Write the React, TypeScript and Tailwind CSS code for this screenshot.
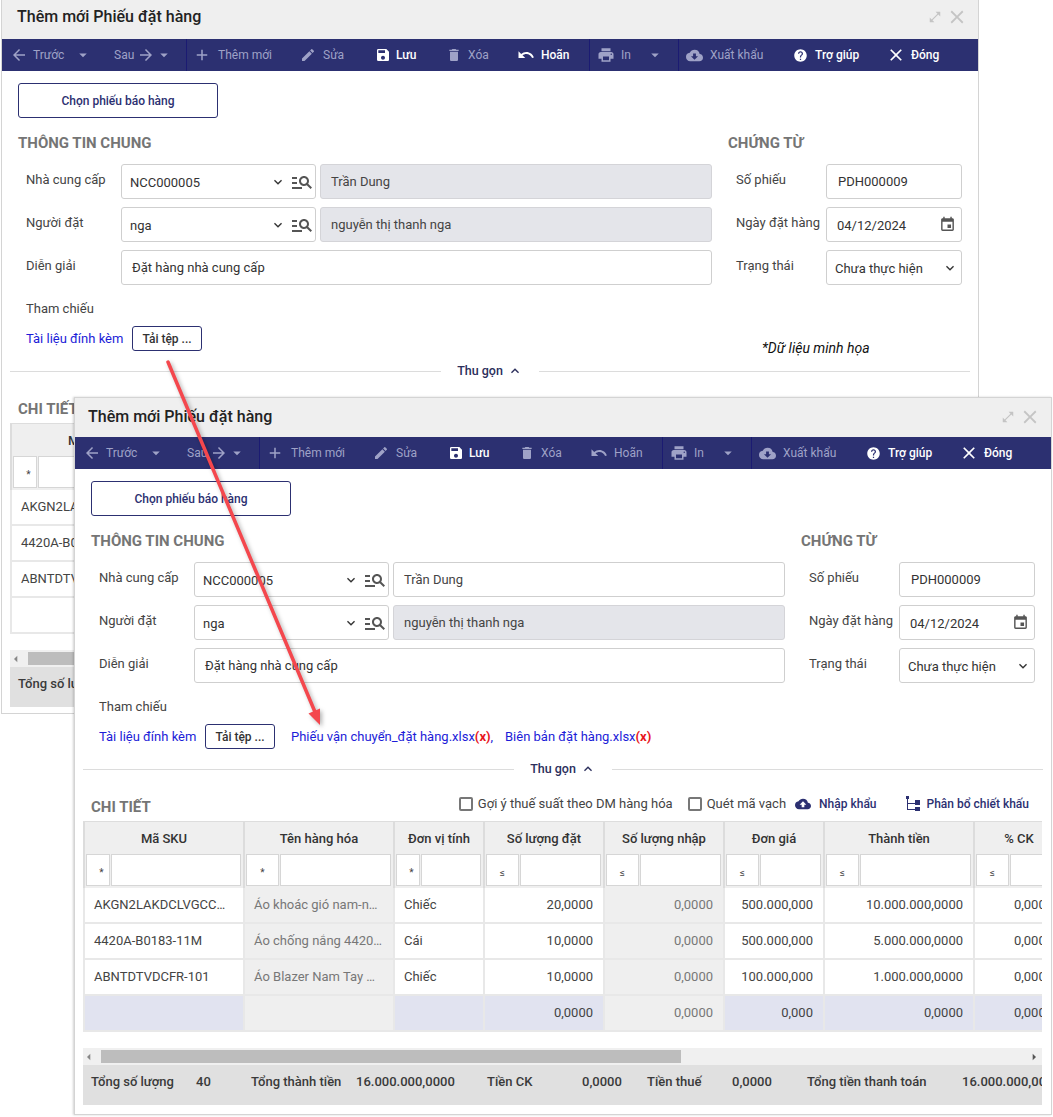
import type { ReactNode } from 'react';
import {
  MdAdd,
  MdArrowBack,
  MdArrowDropDown,
  MdArrowForward,
  MdArrowLeft,
  MdArrowRight,
  MdClose,
  MdCloudDownload,
  MdCloudUpload,
  MdDelete,
  MdEdit,
  MdEvent,
  MdHelp,
  MdKeyboardArrowDown,
  MdKeyboardArrowUp,
  MdManageSearch,
  MdOpenInFull,
  MdPrint,
  MdSave,
  MdUndo
} from 'react-icons/md';

const COLS = 'grid grid-cols-[160px_150px_90px_120px_120px_100px_150px_90px]';

const columns = [
  { label: 'Mã SKU', op: '*', opWidth: 'w-[24px] pl-[7px]' },
  { label: 'Tên hàng hóa', op: '*', opWidth: 'w-[33px]' },
  { label: 'Đơn vị tính', op: '*', opWidth: 'w-[24px] pl-[7px]' },
  { label: 'Số lượng đặt', op: '≤', opWidth: 'w-[33px]' },
  { label: 'Số lượng nhập', op: '≤', opWidth: 'w-[33px]' },
  { label: 'Đơn giá', op: '≤', opWidth: 'w-[33px]' },
  { label: 'Thành tiền', op: '≤', opWidth: 'w-[33px]' },
  { label: '% CK', op: '≤', opWidth: 'w-[33px]' }
];

const rows = [
  ['AKGN2LAKDCLVGCC…', 'Áo khoác gió nam-n…', 'Chiếc', '20,0000', '0,0000', '500.000,000', '10.000.000,0000', '0,0000'],
  ['4420A-B0183-11M', 'Áo chống nắng 4420…', 'Cái', '10,0000', '0,0000', '500.000,000', '5.000.000,0000', '0,0000'],
  ['ABNTDTVDCFR-101', 'Áo Blazer Nam Tay …', 'Chiếc', '10,0000', '0,0000', '100.000,000', '1.000.000,0000', '0,0000']
];

const sumRow = ['', '', '', '0,0000', '0,0000', '0,000', '0,0000', '0,0000'];

function Tool({
  className,
  icon,
  label,
  trailing,
  disabled,
  caret,
  caretClass
}: {
  className: string;
  icon?: ReactNode;
  label: string;
  trailing?: ReactNode;
  disabled?: boolean;
  caret?: boolean;
  caretClass?: string;
}) {
  return (
    <div
      className={`flex h-full shrink-0 items-center text-[12px] ${
        disabled ? 'text-[#9fa2c7]' : 'font-medium text-white'
      } ${className}`}
    >
      {icon}
      <span>{label}</span>
      {trailing}
      {caret && <MdArrowDropDown size={18} className={caretClass} />}
    </div>
  );
}

function Toolbar({ undoDisabled }: { undoDisabled: boolean }) {
  return (
    <div className="flex h-[32px] items-center bg-[#2c3071]">
      <Tool className="w-[97px] gap-[5px] pl-[8px]" icon={<MdArrowBack size={18} />} label="Trước" disabled caret caretClass="ml-[5px]" />
      <Tool className="w-[88px] gap-[3px] border-r border-[#1b1b72] pl-[15px]" label="Sau" trailing={<MdArrowForward size={18} />} disabled caret caretClass="-ml-[3px]" />
      <Tool className="w-[100px] gap-[7px] pl-[6px]" icon={<MdAdd size={18} />} label="Thêm mới" disabled />
      <Tool className="w-[73px] gap-[7px] pl-[13px]" icon={<MdEdit size={16} />} label="Sửa" disabled />
      <Tool className="w-[73px] gap-[5px] pl-[15px]" icon={<MdSave size={16} />} label="Lưu" />
      <Tool className="w-[71px] gap-[6px] pl-[13px]" icon={<MdDelete size={16} />} label="Xóa" disabled />
      <Tool className="w-[86px] gap-[6px] border-r border-[#1b1b72] pl-[13px]" icon={<MdUndo size={18} />} label="Hoãn" disabled={undoDisabled} />
      <Tool className="w-[89px] gap-[6px] border-r border-[#1b1b72] pl-[7px]" icon={<MdPrint size={18} />} label="In" disabled caret caretClass="ml-[9px]" />
      <Tool className="w-[100px] gap-[7px] pl-[7px]" icon={<MdCloudDownload size={17} />} label="Xuất khẩu" disabled />
      <Tool className="w-[96px] gap-[7px] pl-[14px]" icon={<MdHelp size={15} />} label="Trợ giúp" />
      <Tool className="w-[90px] gap-[5px] pl-[11px]" icon={<MdClose size={20} />} label="Đóng" />
    </div>
  );
}

function SectionTitle({ children }: { children: ReactNode }) {
  return <h3 className="text-[15px] font-bold leading-[20px] text-[#757575]">{children}</h3>;
}

function Field({ label, labelWidth, children }: { label: string; labelWidth: string; children: ReactNode }) {
  return (
    <div className="flex h-[35px]">
      <label className={`shrink-0 pb-[4px] pl-[8px] text-[13px] leading-[31px] text-[#444] ${labelWidth}`}>{label}</label>
      {children}
    </div>
  );
}

function LookupInput({ code, name, editable }: { code: string; name: string; editable?: boolean }) {
  return (
    <>
      <div className="flex w-[195px] items-center rounded-[3px] border border-[#cfcfcf] pl-[8px] pr-[1px] text-[13px] text-[#333]">
        <span className="flex-1 pt-[2px]">{code}</span>
        <MdKeyboardArrowDown size={16} className="mr-[4px] text-[#333]" />
        <MdManageSearch size={24} className="text-[#555]" />
      </div>
      <div
        className={`ml-[4px] flex flex-1 items-center rounded-[3px] border pl-[10px] text-[13px] text-[#444] ${
          editable ? 'border-[#cfcfcf] bg-white' : 'border-[#d4d4d8] bg-[#e4e5ea]'
        }`}
      >
        {name}
      </div>
    </>
  );
}

function TreeIcon() {
  return (
    <svg viewBox="0 0 14 16" className="h-[16px] w-[14px]" fill="#2c3071">
      <rect x="0" y="0" width="3" height="3" />
      <rect x="1" y="3" width="1" height="11" />
      <rect x="2" y="7" width="7" height="1" />
      <rect x="2" y="13" width="7" height="1" />
      <rect x="9" y="4" width="5" height="5" />
      <rect x="9" y="11" width="5" height="4" />
    </svg>
  );
}

function DetailTable({ blankSum }: { blankSum?: boolean }) {
  return (
    <div className="mx-[8px] w-[959px] overflow-hidden">
      <div className={`${COLS} h-[33px] border-t border-[#ddd] bg-[#efefef] text-[13px] font-medium text-[#333]`}>
        {columns.map(col => (
          <div key={col.label} className="flex items-center justify-center border-l-2 border-[#dcdcdc] pt-[1px]">
            {col.label}
          </div>
        ))}
      </div>
      <div className={`${COLS} h-[34px] bg-[#efefef]`}>
        {columns.map(col => (
          <div key={col.label} className="flex gap-[1px] border-l-2 border-[#dcdcdc] pb-[2px] pl-[1px] pr-[2px]">
            <div className={`flex shrink-0 items-center justify-center border border-[#d6d6d6] bg-white pt-[5px] text-[10px] text-[#444] ${col.opWidth}`}>
              {col.op}
            </div>
            <div className="flex-1 border border-[#d6d6d6] bg-white" />
          </div>
        ))}
      </div>
      {rows.map(row => (
        <div key={row[0]} className={`${COLS} h-[36px] border-b-2 border-[#e8e8e8] text-[13px] text-[#444]`}>
          {row.map((cell, i) => (
            <div
              key={i}
              className={`flex items-center border-l-2 border-[#e8e8e8] pl-[9px] pr-[10px] ${i > 2 ? 'justify-end' : ''} ${
                i === 1 || i === 4 ? 'bg-[#efefef] text-[#777]' : ''
              }`}
            >
              <span className="whitespace-nowrap">{cell}</span>
            </div>
          ))}
        </div>
      ))}
      <div className={`${COLS} h-[36px] border-b-2 border-[#e8e8e8] text-[13px] text-[#444]`}>
        {sumRow.map((cell, i) => (
          <div
            key={i}
            className={`flex items-center justify-end border-l-2 border-[#e8e8e8] pl-[9px] pr-[10px] ${
              blankSum ? 'bg-white' : i === 1 || i === 4 ? 'bg-[#efefef] text-[#777]' : 'bg-[#e1e3f0]'
            }`}
          >
            {blankSum ? '' : cell}
          </div>
        ))}
      </div>
      <div className="h-[16px]" />
      <div className="flex h-[17px] items-center bg-[#f0f0f0]">
        <MdArrowLeft size={16} className="-ml-[2px] mr-[4px] shrink-0 text-[#888]" />
        <div className="h-[13px] w-[580px] bg-[#bdbdbd]" />
        <div className="flex-1" />
        <MdArrowRight size={16} className="text-[#555]" />
      </div>
      <div className="grid h-[40px] grid-cols-[105px_55px_105px_131px_95px_65px_85px_75px_155px_200px] items-center bg-[#e0e0e0] pb-[7px] pl-[8px] text-[13px] font-medium text-[#3a3a3a]">
        <span>Tổng số lượng</span>
        <span>40</span>
        <span>Tổng thành tiền</span>
        <span>16.000.000,0000</span>
        <span>Tiền CK</span>
        <span>0,0000</span>
        <span>Tiền thuế</span>
        <span>0,0000</span>
        <span>Tổng tiền thanh toán</span>
        <span>16.000.000,0000</span>
      </div>
    </div>
  );
}

function OrderWindow({ className, isBack }: { className: string; isBack?: boolean }) {
  return (
    <div className={`absolute w-[978px] border border-[#d4d4d4] bg-white ${className}`}>
      {/* Title bar */}
      <div
        className={`flex h-[39px] items-center justify-between bg-[#efefef] pr-[10px] ${
          isBack ? 'pb-[5px] pl-[15px]' : 'pb-[2px] pl-[13px]'
        }`}
      >
        <h2 className="text-[16px] font-medium text-[#222]">Thêm mới Phiếu đặt hàng</h2>
        <div className="flex items-center gap-[4px] text-[#c4c4c4]">
          <MdOpenInFull size={14} />
          <MdClose size={22} />
        </div>
      </div>
      <Toolbar undoDisabled={!isBack} />

      <div className="pl-[16px] pt-[12px]">
        <button className="h-[35px] w-[200px] rounded-[3px] border border-[#2c3071] text-[12px] font-medium text-[#2c3071]">
          Chọn phiếu báo hàng
        </button>

        <div className="mt-[15px] flex gap-[16px]">
          {/* General info */}
          <div className="w-[694px]">
            <SectionTitle>THÔNG TIN CHUNG</SectionTitle>
            <div className="mt-[11px] flex flex-col gap-[8px]">
              <Field label="Nhà cung cấp" labelWidth="w-[103px]">
                <LookupInput code="NCC000005" name="Trần Dung" editable={!isBack} />
              </Field>
              <Field label="Người đặt" labelWidth="w-[103px]">
                <LookupInput code="nga" name="nguyễn thị thanh nga" />
              </Field>
              <Field label="Diễn giải" labelWidth="w-[103px]">
                <div className="flex flex-1 items-center rounded-[3px] border border-[#cfcfcf] pl-[10px] text-[13px] text-[#333]">
                  Đặt hàng nhà cung cấp
                </div>
              </Field>
            </div>
          </div>

          {/* Voucher */}
          <div className="w-[234px]">
            <SectionTitle>CHỨNG TỪ</SectionTitle>
            <div className="mt-[11px] flex flex-col gap-[8px]">
              <Field label="Số phiếu" labelWidth="w-[98px]">
                <div className="flex flex-1 items-center rounded-[3px] border border-[#cfcfcf] pl-[11px] text-[13px] text-[#333]">
                  PDH000009
                </div>
              </Field>
              <Field label="Ngày đặt hàng" labelWidth="w-[98px]">
                <div className="flex flex-1 items-center justify-between rounded-[3px] border border-[#cfcfcf] pl-[10px] pr-[5px] text-[13px] text-[#333]">
                  <span className="pt-[2px]">04/12/2024</span>
                  <MdEvent size={17} className="text-[#555]" />
                </div>
              </Field>
              <Field label="Trạng thái" labelWidth="w-[98px]">
                <div className="flex flex-1 items-center justify-between rounded-[3px] border border-[#cfcfcf] pl-[8px] pr-[3px] text-[13px] text-[#333]">
                  <span className="pt-[2px]">Chưa thực hiện</span>
                  <MdKeyboardArrowDown size={16} />
                </div>
              </Field>
            </div>
          </div>
        </div>

        <div className="mt-[14px] h-[19px] pl-[8px] text-[13px] leading-[20px] text-[#444]">Tham chiếu</div>

        <div className="mt-[8px] flex h-[25px] items-start text-[13px]">
          <span className="ml-[8px] w-[106px] leading-[25px] text-[#1c1cd8]">Tài liệu đính kèm</span>
          <button className="h-[25px] w-[70px] rounded-[3px] border border-[#2c3071] text-[12px] font-medium text-[#333]">
            Tải tệp ...
          </button>
          {isBack ? (
            <span className="ml-[560px] mt-[12px] whitespace-nowrap text-[14px] italic leading-[20px] text-[#111]">
              *Dữ liệu minh họa
            </span>
          ) : (
            <>
              <span className="ml-[16px] w-[214px] whitespace-nowrap leading-[25px] text-[#1c1cd8]">
                Phiếu vận chuyển_đặt hàng.xlsx<b className="text-[#e8141c]">(x)</b>,
              </span>
              <span className="whitespace-nowrap leading-[25px] text-[#1c1cd8]">
                Biên bản đặt hàng.xlsx<b className="text-[#e8141c]">(x)</b>
              </span>
            </>
          )}
        </div>
      </div>

      {/* Collapse divider */}
      <div className="mt-[10px] flex h-[20px] items-center px-[8px]">
        <div className="h-[1px] flex-1 bg-[#dcdcdc]" />
        <div className="flex items-center gap-[4px] px-[16px] text-[12.5px] font-medium text-[#2c2f5c]">
          <span>Thu gọn</span>
          <MdKeyboardArrowUp size={16} />
        </div>
        <div className="h-[1px] flex-1 bg-[#dcdcdc]" />
      </div>

      {/* Detail header */}
      <div className="mt-[16px] flex h-[26px] items-center pl-[16px] pr-[22px]">
        <div className="pb-[2px]">
          <SectionTitle>CHI TIẾT</SectionTitle>
        </div>
        <div className="ml-auto flex items-center pb-[8px] text-[13px] text-[#444]">
          <div className="h-[14px] w-[14px] rounded-[2px] border-2 border-[#777]" />
          <span className="ml-[5px]">Gợi ý thuế suất theo DM hàng hóa</span>
          <div className="ml-[15px] h-[14px] w-[14px] rounded-[2px] border-2 border-[#777]" />
          <span className="ml-[5px]">Quét mã vạch</span>
          <MdCloudUpload size={16} className="ml-[9px] text-[#2c3071]" />
          <span className="ml-[8px] text-[12px] font-medium text-[#2c3071]">Nhập khẩu</span>
          <div className="ml-[29px]">
            <TreeIcon />
          </div>
          <span className="ml-[7px] text-[12px] font-medium text-[#2c3071]">Phân bổ chiết khấu</span>
        </div>
      </div>

      <DetailTable blankSum={isBack} />
      <div className={isBack ? 'h-[6px]' : 'h-[9px]'} />
    </div>
  );
}

export default function App() {
  return (
    <div className="relative h-[1117px] w-[1053px] overflow-hidden bg-white font-[Roboto,sans-serif]">
      <OrderWindow className="left-[1px] top-[-1px]" isBack />
      <OrderWindow className="left-[74px] top-[397px] shadow-[-1px_0_2px_rgba(0,0,0,0.18)]" />

      {/* Red annotation arrow */}
      <svg
        viewBox="0 0 1053 1117"
        className="pointer-events-none absolute left-0 top-0 h-[1117px] w-[1053px] drop-shadow-[2px_2px_2px_rgba(0,0,0,0.3)]"
      >
        <line x1="168" y1="362" x2="315" y2="712" stroke="#f4474d" strokeWidth="3.5" strokeLinecap="round" />
        <polygon points="320,725 308.5,713.5 320,708.5" fill="#f4474d" />
      </svg>
    </div>
  );
}
